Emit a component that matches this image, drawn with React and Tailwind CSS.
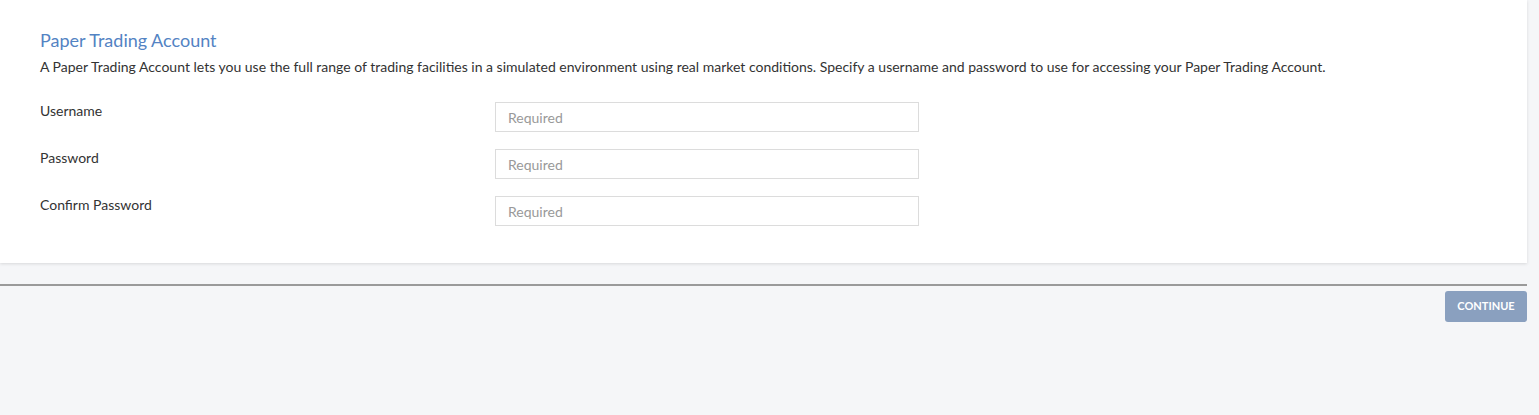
import React from "react";

const fields = [
  { name: "username", label: "Username", type: "text" },
  { name: "password", label: "Password", type: "password" },
  { name: "confirm", label: "Confirm Password", type: "password" },
];

export default function App() {
  return (
    <div className="min-h-[415px] bg-[#f5f6f8] font-['Lato','Open_Sans',sans-serif] text-[#333]">
      <div className="w-[1527px]">
        <div className="bg-white pl-10 pt-[28px] pb-[37px] shadow-[0_1px_3px_rgba(0,0,0,0.12)]">
          <h2 className="text-[18px] leading-6 text-[#5383c3]">Paper Trading Account</h2>
          <p className="mt-[5px] text-[14px] leading-5">
            A Paper Trading Account lets you use the full range of trading facilities in a simulated environment using real market conditions. Specify a username and password to use for accessing your Paper Trading Account.
          </p>
          <div className="mt-[25px] flex flex-col gap-[17px]">
            {fields.map((f) => (
              <div key={f.name} className="flex items-start">
                <label className="w-[455px] text-[14px] leading-5 -mt-[1px]">{f.label}</label>
                <input
                  name={f.name}
                  type={f.type}
                  placeholder="Required"
                  className="h-[30px] w-[424px] border border-[#dcdcdc] px-3 text-[14px] placeholder:text-[#999] outline-none"
                />
              </div>
            ))}
          </div>
        </div>
        <div className="mt-[21px] border-t-2 border-[#9a9a9a]" />
        <div className="mt-[5px] flex justify-end">
          <button className="h-[31px] w-[82px] rounded-[3px] bg-[#8aa0bf] text-[11px] font-bold text-white">
            CONTINUE
          </button>
        </div>
      </div>
    </div>
  );
}
